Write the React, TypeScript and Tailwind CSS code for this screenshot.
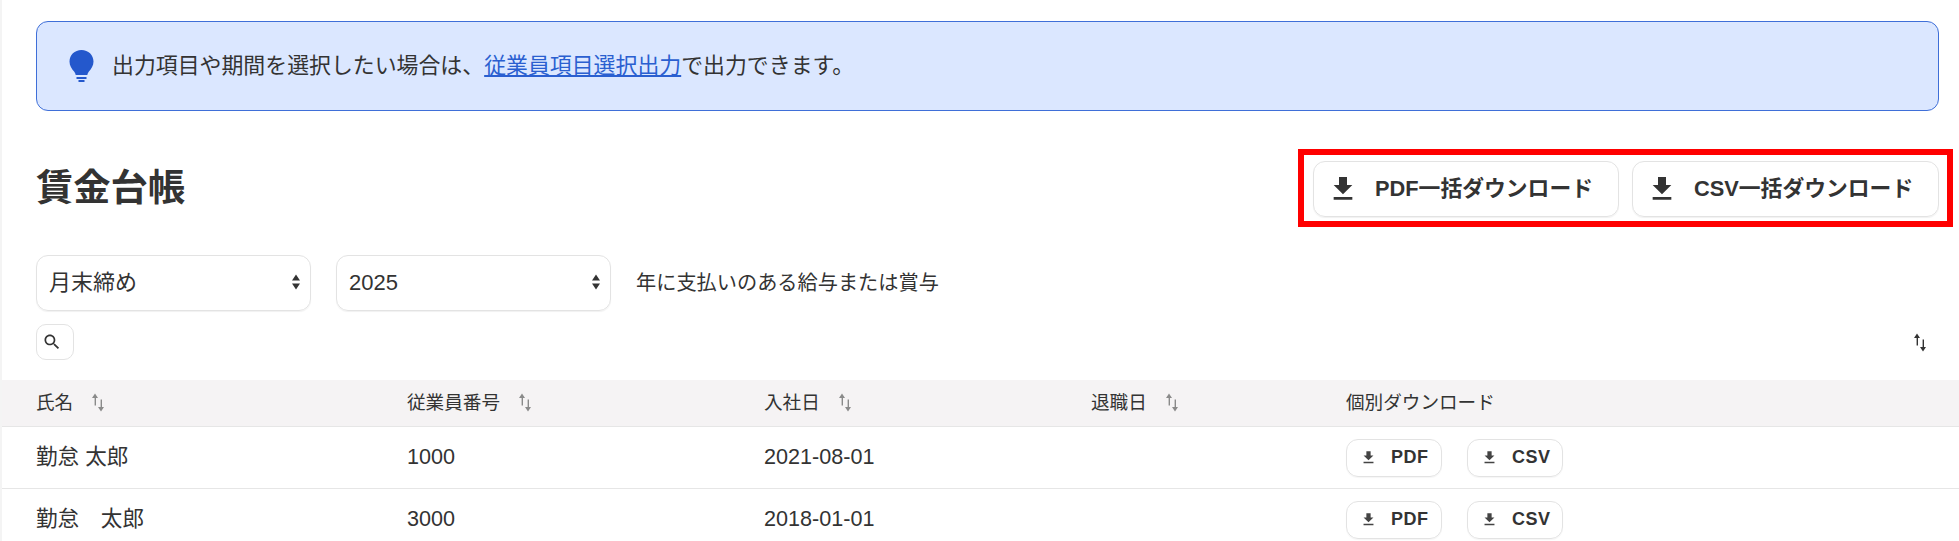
import React from 'react';

const FONT = "font-['Liberation_Sans','Noto_Sans_CJK_JP',sans-serif]";

const DownloadIcon = ({ className }: { className: string }) => (
  <svg viewBox="0 0 24 24" fill="currentColor" className={className}>
    <path d="M19 9h-4V3H9v6H5l7 7 7-7zM5 18v2h14v-2H5z" />
  </svg>
);

const SortIcon = ({ className }: { className: string }) => (
  <svg viewBox="0 0 14 19" fill="currentColor" className={className}>
    <path d="M4 0.5 7 5H5v7.5H3.6V5H1z" />
    <path d="M9.6 6.5H11V14h2l-3 4.5L7 14h2.6z" />
  </svg>
);

const FakeSelect = ({ label, className }: { label: string; className: string }) => (
  <div className={`flex h-[56px] w-[275px] items-center justify-between rounded-[12px] border border-[#e3e3e3] pb-[2px] pl-[12px] pr-[9px] text-[22px] shadow-[0_1px_1px_rgba(0,0,0,0.06)] ${className}`}>
    <span>{label}</span>
    <svg viewBox="0 0 10 16" fill="#333333" className="h-[16px] w-[10px]">
      <path d="M5 0.5 9 6.5H1zM5 15.5 1 9.5h8z" />
    </svg>
  </div>
);

const BigButton = ({ label, className }: { label: string; className: string }) => (
  <button className={`flex h-[56px] items-center rounded-[12px] border border-[#e3e3e3] pl-[13px] text-[21.8px] font-bold shadow-[0_1px_1px_rgba(0,0,0,0.06)] ${className}`}>
    <DownloadIcon className="h-[32px] w-[32px] text-[#333333]" />
    <span className="ml-[16px]">{label}</span>
  </button>
);

const SmallButton = ({ label }: { label: string }) => (
  <button className="flex h-[38px] w-[96px] items-center rounded-[12px] border border-[#e3e3e3] pl-[13px] text-[18px] font-bold shadow-[0_1px_1px_rgba(0,0,0,0.04)]">
    <DownloadIcon className="h-[17px] w-[17px] text-[#444444]" />
    <span className="ml-[14px] tracking-[0.5px]">{label}</span>
  </button>
);

const COLS = 'grid grid-cols-[371px_357px_327px_255px_1fr] items-center pl-[34px]';

const rows = [
  { name: '勤怠 太郎', no: '1000', date: '2021-08-01' },
  { name: '勤怠　太郎', no: '3000', date: '2018-01-01' },
];

const HeadCell = ({ label }: { label: string }) => (
  <div className="flex items-center gap-[18px]">
    <span>{label}</span>
    <SortIcon className="h-[19px] w-[14px] text-[#8a8a8a]" />
  </div>
);

export default function App() {
  return (
    <div className={`h-[541px] overflow-hidden border-l-2 border-[#f4f4f4] bg-white text-[#333333] ${FONT}`}>
      <div className="ml-[34px] mr-[20px] mt-[21px] flex h-[90px] items-center rounded-[12px] border border-[#3f6fd8] bg-[#dbe7ff] pl-[32px] text-[21.9px]">
        <svg viewBox="0 0 25 32" fill="#2458cc" className="h-[32px] w-[25px]">
          <path d="M12.5 0C5.6 0 0.5 5 0.5 11.5c0 4.2 2.2 7.3 4.6 10 0.9 1.1 1.4 2.2 1.6 3.5h11.6c0.2-1.3 0.7-2.4 1.6-3.5 2.4-2.7 4.6-5.8 4.6-10C24.5 5 19.4 0 12.5 0z" />
          <path d="M7.5 27h10v2h-10zM9.5 30h6v2h-6z" />
        </svg>
        <p className="ml-[18px]">
          出力項目や期間を選択したい場合は、
          <a className="text-[#2a5fd0] underline">従業員項目選択出力</a>
          で出力できます。
        </p>
      </div>

      <div className="mr-[20px] mt-[50px] flex items-center justify-between pl-[34px]">
        <h1 className="text-[37.3px] font-bold">賃金台帳</h1>
        <div className="relative flex gap-[13px]">
          <BigButton label="PDF一括ダウンロード" className="w-[306px]" />
          <BigButton label="CSV一括ダウンロード" className="w-[307px]" />
          <div className="absolute -bottom-[10px] -left-[15px] -right-[14px] -top-[12px] border-[6px] border-[#ff0000]" />
        </div>
      </div>

      <div className="ml-[34px] mt-[38px] flex items-center">
        <FakeSelect label="月末締め" className="" />
        <FakeSelect label="2025" className="ml-[25px]" />
        <span className="ml-[25px] text-[20.2px]">年に支払いのある給与または賞与</span>
      </div>

      <div className="ml-[34px] mr-[20px] mt-[13px] flex items-center justify-between">
        <button className="flex h-[36px] w-[38px] items-center justify-center rounded-[10px] border border-[#e3e3e3] pr-[6px]">
          <svg viewBox="0 0 24 24" fill="#333333" className="h-[20px] w-[20px]">
            <path d="M15.5 14h-.79l-.28-.27C15.41 12.59 16 11.11 16 9.5 16 5.91 13.09 3 9.5 3S3 5.91 3 9.5 5.91 16 9.5 16c1.61 0 3.09-.59 4.23-1.57l.27.28v.79l5 4.99L20.49 19l-4.99-5zm-6 0C7.01 14 5 11.99 5 9.5S7.01 5 9.5 5 14 7.01 14 9.5 11.99 14 9.5 14z" />
          </svg>
        </button>
        <SortIcon className="mr-[12px] h-[19px] w-[14px] text-[#333333]" />
      </div>

      <div className="mt-[20px]">
        <div className={`${COLS} h-[47px] border-b border-[#e6e6e6] bg-[#f5f3f4] text-[18.6px]`}>
          <HeadCell label="氏名" />
          <HeadCell label="従業員番号" />
          <HeadCell label="入社日" />
          <HeadCell label="退職日" />
          <div>個別ダウンロード</div>
        </div>
        {rows.map((row) => (
          <div key={row.no} className={`${COLS} h-[62px] border-b border-[#e6e6e6] text-[21.6px]`}>
            <div>{row.name}</div>
            <div>{row.no}</div>
            <div>{row.date}</div>
            <div />
            <div className="flex gap-[25px]">
              <SmallButton label="PDF" />
              <SmallButton label="CSV" />
            </div>
          </div>
        ))}
      </div>
    </div>
  );
}
